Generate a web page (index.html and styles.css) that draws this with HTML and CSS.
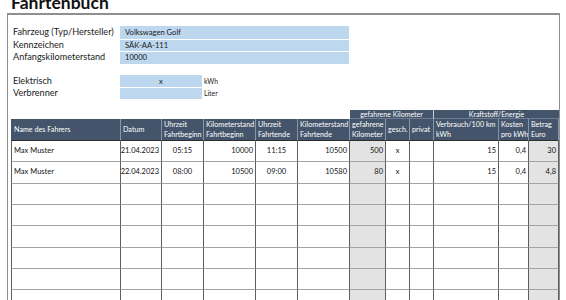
FILE: index.html
```html
<!DOCTYPE html>
<html lang="de">
<head>
<meta charset="utf-8">
<title>Fahrtenbuch</title>
<link rel="stylesheet" href="styles.css">
</head>
<body>
<div class="sheet">
  <h1 class="title">Fahrtenbuch</h1>
  <div class="frame">
    <div class="vehicle">
      <div class="label">Fahrzeug (Typ/Hersteller)</div><div class="field">Volkswagen Golf</div>
      <div class="label">Kennzeichen</div><div class="field">SÄK-AA-111</div>
      <div class="label">Anfangskilometerstand</div><div class="field">10000</div>
    </div>
    <div class="energy">
      <div class="label">Elektrisch</div><div class="field center">x</div><div class="unit">kWh</div>
      <div class="label">Verbrenner</div><div class="field"></div><div class="unit">Liter</div>
    </div>
    <div class="log">
      <div class="g-spacer"></div>
      <div class="g-cell g-km">gefahrene Kilometer</div>
      <div class="g-cell g-fuel">Kraftstoff/Energie</div>

      <div class="h first">Name des Fahrers</div>
      <div class="h">Datum</div>
      <div class="h">Uhrzeit<br>Fahrtbeginn</div>
      <div class="h">Kilometerstand<br>Fahrtbeginn</div>
      <div class="h">Uhrzeit<br>Fahrtende</div>
      <div class="h">Kilometerstand<br>Fahrtende</div>
      <div class="h">gefahrene<br>Kilometer</div>
      <div class="h">gesch.</div>
      <div class="h">privat</div>
      <div class="h">Verbrauch/100 km<br>kWh</div>
      <div class="h">Kosten<br>pro kWh</div>
      <div class="h">Betrag<br>Euro</div>

      <div class="c first">Max Muster</div>
      <div class="c r">21.04.2023</div>
      <div class="c m">05:15</div>
      <div class="c r">10000</div>
      <div class="c m">11:15</div>
      <div class="c r">10500</div>
      <div class="c r shade">500</div>
      <div class="c m">x</div>
      <div class="c"></div>
      <div class="c r">15</div>
      <div class="c r">0,4</div>
      <div class="c r shade">30</div>

      <div class="c first">Max Muster</div>
      <div class="c r">22.04.2023</div>
      <div class="c m">08:00</div>
      <div class="c r">10500</div>
      <div class="c m">09:00</div>
      <div class="c r">10580</div>
      <div class="c r shade">80</div>
      <div class="c m">x</div>
      <div class="c"></div>
      <div class="c r">15</div>
      <div class="c r">0,4</div>
      <div class="c r shade">4,8</div>

      <div class="c first"></div><div class="c"></div><div class="c"></div><div class="c"></div><div class="c"></div><div class="c"></div><div class="c shade"></div><div class="c"></div><div class="c"></div><div class="c"></div><div class="c"></div><div class="c shade"></div>
      <div class="c first"></div><div class="c"></div><div class="c"></div><div class="c"></div><div class="c"></div><div class="c"></div><div class="c shade"></div><div class="c"></div><div class="c"></div><div class="c"></div><div class="c"></div><div class="c shade"></div>
      <div class="c first"></div><div class="c"></div><div class="c"></div><div class="c"></div><div class="c"></div><div class="c"></div><div class="c shade"></div><div class="c"></div><div class="c"></div><div class="c"></div><div class="c"></div><div class="c shade"></div>
      <div class="c first"></div><div class="c"></div><div class="c"></div><div class="c"></div><div class="c"></div><div class="c"></div><div class="c shade"></div><div class="c"></div><div class="c"></div><div class="c"></div><div class="c"></div><div class="c shade"></div>
      <div class="c first"></div><div class="c"></div><div class="c"></div><div class="c"></div><div class="c"></div><div class="c"></div><div class="c shade"></div><div class="c"></div><div class="c"></div><div class="c"></div><div class="c"></div><div class="c shade"></div>
      <div class="c first"></div><div class="c"></div><div class="c"></div><div class="c"></div><div class="c"></div><div class="c"></div><div class="c shade"></div><div class="c"></div><div class="c"></div><div class="c"></div><div class="c"></div><div class="c shade"></div>
    </div>
  </div>
</div>
</body>
</html>
```

FILE: styles.css
```css
html, body {
  margin: 0;
  padding: 0;
  background: #ffffff;
  overflow: hidden;
}
body {
  font-family: Lato, "Noto Sans", sans-serif;
  color: #1a1a1a;
}
.sheet {
  width: 566px;
}
.title {
  margin: -6px 0 2px 11px;
  font-size: 17.5px;
  line-height: 17px;
  font-weight: 700;
  color: #111;
}
.frame {
  margin-left: 7px;
  width: 551px;
  border-top: 2px solid #8f8f8f;
  border-left: 1px solid #8f8f8f;
  border-right: 1px solid #8f8f8f;
  height: 300px;
}
.vehicle {
  display: grid;
  grid-template-columns: 112px 229px;
  grid-template-rows: 12.5px 12.5px 12.5px;
  margin-top: 11px;
}
.energy {
  display: grid;
  grid-template-columns: 112px 82px auto;
  grid-template-rows: 12px 12px;
  margin-top: 11.5px;
}
.label {
  padding-left: 5px;
  font-size: 9.1px;
  line-height: 12px;
  white-space: nowrap;
}
.field {
  background: #bdd7ee;
  font-size: 7.6px;
  line-height: 12px;
  padding-left: 5px;
  white-space: nowrap;
}
.vehicle .field + .label + .field,
.energy .unit + .label + .field {
  border-top: 1px solid #ffffff;
  line-height: 11px;
}
.field.center {
  text-align: center;
  padding-left: 0;
}
.unit {
  font-size: 6.8px;
  line-height: 12px;
  padding-left: 2px;
}
.log {
  display: grid;
  grid-template-columns: 110px 41px 42px 52px 42px 52px 36px 24px 24px 65px 30px 30px;
  grid-template-rows: 9px 22px;
  grid-auto-rows: 21.33px;
  margin-top: 11px;
  margin-left: 3px;
  width: 548px;
}
.g-spacer {
  grid-column: span 6;
}
.g-cell {
  background: #44546a;
  color: #ffffff;
  font-size: 7px;
  line-height: 9px;
  text-align: center;
  border-bottom: 1px solid #6f7d92;
  white-space: nowrap;
  box-sizing: border-box;
}
.g-km {
  grid-column: span 3;
  border-right: 1px solid #c9ced6;
}
.g-fuel {
  grid-column: span 3;
}
.h {
  background: #44546a;
  color: #ffffff;
  font-size: 7.2px;
  line-height: 10px;
  padding: 0 2px;
  display: flex;
  align-items: center;
  border-right: 1px solid #8a96a8;
  border-bottom: 1px solid #2e2e2e;
  white-space: nowrap;
  overflow: hidden;
  box-sizing: border-box;
}
.h.first {
  border-left: 1px solid #44546a;
}
.c {
  font-size: 7.5px;
  line-height: 10px;
  padding: 0 2px;
  display: flex;
  align-items: center;
  border-right: 1px solid #5e5e5e;
  border-bottom: 1px solid #a4a4a4;
  white-space: nowrap;
  box-sizing: border-box;
  color: #111;
}
.c.first {
  border-left: 1px solid #5e5e5e;
}
.c.r {
  justify-content: flex-end;
}
.c.m {
  justify-content: center;
}
.c.shade {
  background: #e4e3e3;
}
```
